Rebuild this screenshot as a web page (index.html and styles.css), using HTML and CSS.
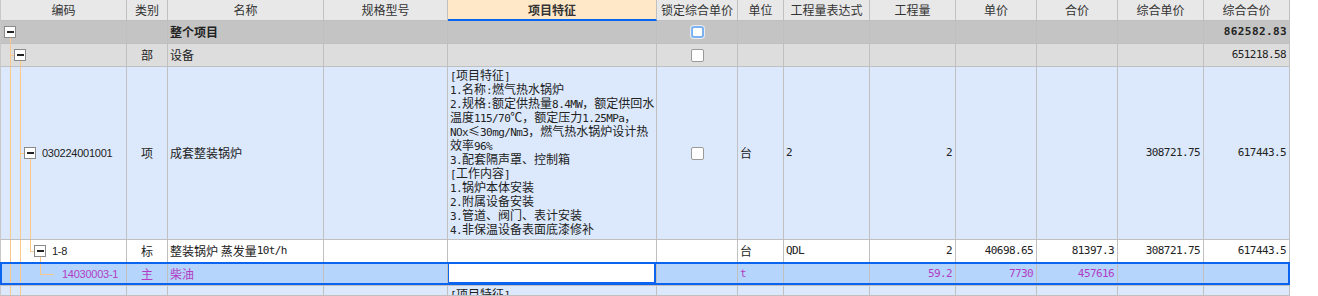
FILE: index.html
```html
<!DOCTYPE html>
<html lang="zh-CN">
<head>
<meta charset="utf-8">
<title>分部分项工程量清单</title>
<link rel="stylesheet" href="styles.css">
</head>
<body>
<div class="sheet">
  <div class="row head">
    <div class="c">编码</div>
    <div class="c">类别</div>
    <div class="c">名称</div>
    <div class="c">规格型号</div>
    <div class="c feat-head">项目特征</div>
    <div class="c">锁定综合单价</div>
    <div class="c">单位</div>
    <div class="c">工程量表达式</div>
    <div class="c">工程量</div>
    <div class="c">单价</div>
    <div class="c">合价</div>
    <div class="c">综合单价</div>
    <div class="c">综合合价</div>
  </div>

  <div class="row r-root">
    <div class="c tree"><span class="node open"><span class="box"></span></span></div>
    <div class="c"></div>
    <div class="c b">整个项目</div>
    <div class="c"></div>
    <div class="c"></div>
    <div class="c ctr"><span class="cb focus"></span></div>
    <div class="c"></div>
    <div class="c"></div>
    <div class="c"></div>
    <div class="c"></div>
    <div class="c"></div>
    <div class="c"></div>
    <div class="c num bold">862582.83</div>
  </div>

  <div class="row r-part">
    <div class="c tree"><span class="g tee"></span><span class="node open"><span class="box"></span></span></div>
    <div class="c ctr">部</div>
    <div class="c">设备</div>
    <div class="c"></div>
    <div class="c"></div>
    <div class="c ctr"><span class="cb"></span></div>
    <div class="c"></div>
    <div class="c"></div>
    <div class="c"></div>
    <div class="c"></div>
    <div class="c"></div>
    <div class="c"></div>
    <div class="c num">651218.58</div>
  </div>

  <div class="row r-item">
    <div class="c tree"><span class="g pipe"></span><span class="g tee"></span><span class="node open"><span class="box"></span></span><span class="code">030224001001</span></div>
    <div class="c ctr">项</div>
    <div class="c">成套整装锅炉</div>
    <div class="c"></div>
    <div class="c feat">
      <div><span class="a">[</span>项目特征<span class="a">]</span></div>
      <div><span class="a">1.</span>名称<span class="a">:</span>燃气热水锅炉</div>
      <div><span class="a">2.</span>规格<span class="a">:</span>额定供热量<span class="a">8.4MW</span>，额定供回水</div>
      <div>温度<span class="a">115/70</span>℃，额定压力<span class="a">1.25MPa</span>，</div>
      <div><span class="a">NOx</span>≤<span class="a">30mg/Nm3</span>，燃气热水锅炉设计热</div>
      <div>效率<span class="a">96%</span></div>
      <div><span class="a">3.</span>配套隔声罩、控制箱</div>
      <div><span class="a">[</span>工作内容<span class="a">]</span></div>
      <div><span class="a">1.</span>锅炉本体安装</div>
      <div><span class="a">2.</span>附属设备安装</div>
      <div><span class="a">3.</span>管道、阀门、表计安装</div>
      <div><span class="a">4.</span>非保温设备表面底漆修补</div>
    </div>
    <div class="c ctr"><span class="cb"></span></div>
    <div class="c">台</div>
    <div class="c mono">2</div>
    <div class="c num">2</div>
    <div class="c"></div>
    <div class="c"></div>
    <div class="c num">308721.75</div>
    <div class="c num">617443.5</div>
  </div>

  <div class="row r-quota">
    <div class="c tree"><span class="g pipe"></span><span class="g pipe"></span><span class="g elbow"></span><span class="node open"><span class="box"></span></span><span class="code">1-8</span></div>
    <div class="c ctr">标</div>
    <div class="c">整装锅炉 蒸发量<span class="a">10t/h</span></div>
    <div class="c"></div>
    <div class="c"></div>
    <div class="c"></div>
    <div class="c">台</div>
    <div class="c mono">QDL</div>
    <div class="c num">2</div>
    <div class="c num">40698.65</div>
    <div class="c num">81397.3</div>
    <div class="c num">308721.75</div>
    <div class="c num">617443.5</div>
  </div>

  <div class="row r-sel">
    <div class="c tree"><span class="g pipe"></span><span class="g pipe"></span><span class="g"></span><span class="g elbow"></span><span class="g hl"></span><span class="code leaf">14030003-1</span></div>
    <div class="c ctr">主</div>
    <div class="c">柴油</div>
    <div class="c"></div>
    <div class="c edit"></div>
    <div class="c"></div>
    <div class="c mono">t</div>
    <div class="c"></div>
    <div class="c num">59.2</div>
    <div class="c num">7730</div>
    <div class="c num">457616</div>
    <div class="c"></div>
    <div class="c"></div>
  </div>

  <div class="row r-next">
    <div class="c tree"><span class="g pipe"></span><span class="g pipe"></span></div>
    <div class="c"></div>
    <div class="c"></div>
    <div class="c"></div>
    <div class="c feat"><div><span class="a">[</span>项目特征<span class="a">]</span></div></div>
    <div class="c"></div>
    <div class="c"></div>
    <div class="c"></div>
    <div class="c"></div>
    <div class="c"></div>
    <div class="c"></div>
    <div class="c"></div>
    <div class="c"></div>
  </div>
</div>
</body>
</html>
```

FILE: styles.css
```css
* { box-sizing: border-box; }
html, body { margin: 0; padding: 0; background: #fff; overflow: hidden; }
body {
  font-family: "Noto Sans CJK SC", "Noto Sans", sans-serif;
  font-size: 12px;
  line-height: 14px;
  color: #222;
}

.sheet {
  width: 1290px;
  border-left: 1px solid #c8c8c8;
}

.row {
  display: grid;
  grid-template-columns: 126px 41px 156px 124px 209px 81px 46px 86px 86px 81px 81px 86px 86px;
  height: 23px;
}

.c {
  border-right: 1px solid #c0c0c0;
  border-bottom: 1px solid #c0c0c0;
  display: flex;
  align-items: center;
  padding: 0 2px;
  overflow: hidden;
  white-space: nowrap;
  min-width: 0;
}

.head { height: 21px; background: #e8e8e8; color: #333; }
.head .c { justify-content: center; }
.feat-head {
  background: #ffe8c8;
  font-weight: bold;
  border-bottom: 2px solid #0a64f0;
}

.r-root { background: #c4c4c4; }
.r-part { background: #dddddd; }
.r-item { background: #dce9fc; height: 173px; }
.r-quota { background: #ffffff; }
.r-sel { background: #b5d5fc; color: #b43cc4; position: relative; }
.r-next { background: #dce9fc; height: 10px; }

.r-sel::after {
  content: "";
  position: absolute;
  left: -1px;
  right: 0;
  top: -1px;
  bottom: 1px;
  border: 2px solid #0a64f0;
  pointer-events: none;
}

.edit { background: #fff; position: relative; }
.edit::after {
  content: "";
  position: absolute;
  left: -1px;
  right: 0;
  top: -1px;
  bottom: 1px;
  border: 2px solid #0a64f0;
}

.ctr { justify-content: center; }
.b { font-weight: bold; }

.num {
  justify-content: flex-end;
  padding-right: 3px;
  font-family: "DejaVu Sans Mono", monospace;
  font-size: 11px;
  letter-spacing: -0.6px;
}
.num.bold { font-weight: bold; letter-spacing: 0.4px; padding-right: 2px; }
.mono {
  font-family: "DejaVu Sans Mono", monospace;
  font-size: 11px;
  letter-spacing: -0.6px;
}
.a {
  font-family: "DejaVu Sans Mono", monospace;
  font-size: 11px;
  letter-spacing: -0.6px;
  line-height: 12px;
}

/* item feature text */
.feat {
  display: block;
  padding: 1px 2px 0 2px;
  align-self: stretch;
}
.feat > div { height: 14px; line-height: 14px; }

/* checkboxes */
.cb {
  width: 13px;
  height: 13px;
  border: 1px solid #9a9a9a;
  border-radius: 2px;
  background: #fff;
}
.cb.focus {
  width: 13px;
  height: 12px;
  border: 2px solid #7ab2f4;
  border-radius: 3px;
  box-shadow: 0 0 0 1px #ececec;
}

/* tree column */
.tree { padding: 0 0 0 3px; align-items: stretch; }
.g { flex: none; width: 10px; }
.g.pipe {
  background: linear-gradient(#fdc88a, #fdc88a) 6px 0 / 1px 100% no-repeat;
}
.g.tee {
  background:
    linear-gradient(#fdc88a, #fdc88a) 6px 0 / 1px 100% no-repeat,
    linear-gradient(#fdc88a, #fdc88a) 6px 50% / 4px 1px no-repeat;
}
.g.elbow {
  background:
    linear-gradient(#fdc88a, #fdc88a) 6px 0 / 1px 50% no-repeat,
    linear-gradient(#fdc88a, #fdc88a) 6px 50% / 4px 1px no-repeat;
}
.g.hl {
  background: linear-gradient(#fdc88a, #fdc88a) 0 50% / 10px 1px no-repeat;
}
.node { flex: none; width: 12px; display: flex; align-items: center; }
.node.open {
  background: linear-gradient(#fdc88a, #fdc88a) 6px 100% / 1px 50% no-repeat;
}
.box {
  width: 12px;
  height: 12px;
  border: 1px solid #8a8a8a;
  background: linear-gradient(#222, #222) 2px 4px / 7px 2px no-repeat, #fff;
}
.code {
  align-self: center;
  margin-left: 6px;
  font-family: "Liberation Sans", Arial, sans-serif;
  font-size: 11px;
  letter-spacing: -0.25px;
}
.code.leaf { margin-left: 8px; }
```
